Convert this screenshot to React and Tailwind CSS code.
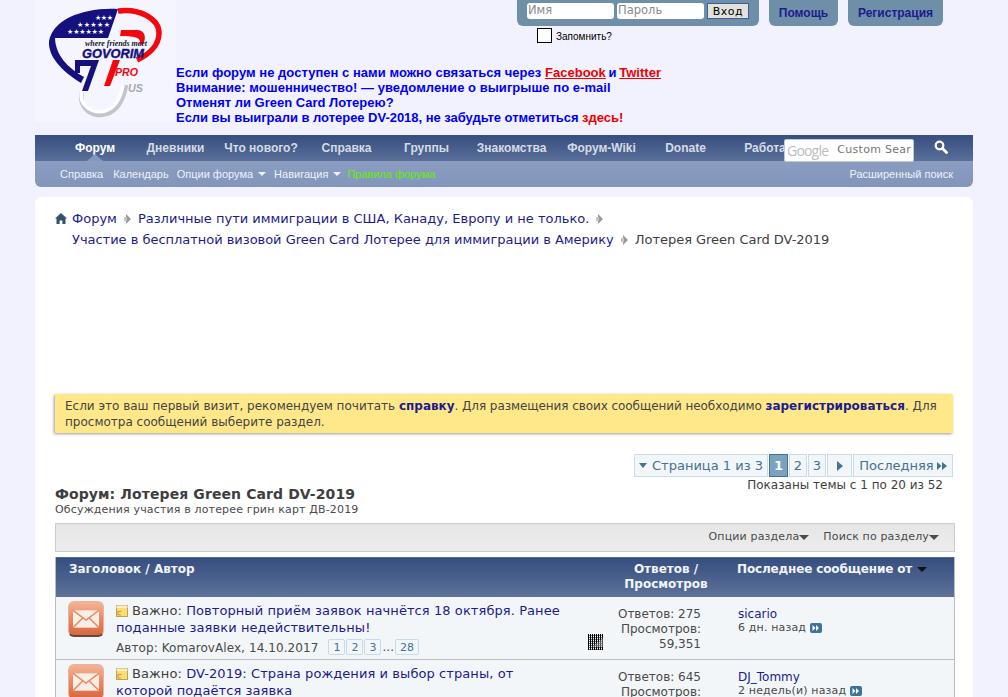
const mainNav = [
  { label: "Форум", width: "w-[80px]", active: true },
  { label: "Дневники", width: "w-[81px]" },
  { label: "Что нового?", width: "w-[90px]" },
  { label: "Справка", width: "w-[81px]" },
  { label: "Группы", width: "w-[79px]" },
  { label: "Знакомства", width: "w-[91px]" },
  { label: "Форум-Wiki", width: "w-[89px]" },
  { label: "Donate", width: "w-[79px]" },
  { label: "Работа", width: "w-[80px]" },
];

const threads = [
  {
    title: ["Повторный приём заявок начнётся 18 октября. Ранее", "поданные заявки недействительны!"],
    author: "KomarovAlex, 14.10.2017",
    pages: ["1", "2", "3"],
    lastPage: "28",
    replies: "275",
    views: "59,351",
    user: "sicario",
    ago: "6 дн. назад",
    broken: true,
  },
  {
    title: ["DV-2019: Страна рождения и выбор страны, от", "которой подаётся заявка"],
    author: "",
    replies: "645",
    views: "",
    user: "DJ_Tommy",
    ago: "2 недель(и) назад",
  },
];

const Logo = () => (
  <svg viewBox="0 0 130 115" className="w-[130px] h-[115px]">
    <path d="M78 4 C45 2 12 14 9 37 L15 33 L68 33 Z" fill="#14107e" />
    <path d="M9 36 C8 52 22 66 41 78 L44 72 C28 63 15 50 15 32 Z" fill="#14107e" />
    <path d="M35 55 H59 L48 86 H42 L51 61 H40 V68 H35 Z" fill="#14107e" />
    <path d="M78 6 C100 3 119 14 119 28 C119 41 108 50 97 55" fill="none" stroke="#f4060f" strokeWidth="5.5" />
    <path d="M81 25 H97 C107 25 107 38 100 41 C102 33 97 31 80 31 Z" fill="#f4060f" />
    <path d="M73 55 H80 L70 81 H64 Z" fill="#f4060f" />
    <path d="M42 87 C38 103 52 113 66 109 C78 106 84 93 86 80" fill="none" stroke="#c4c4ce" strokeWidth="4.5" />
    <path d="M42 86 C38 100 52 109 65 106 C76 103 81 91 83 80" fill="none" stroke="#ffffff" strokeWidth="3.5" />
    <g fill="#ffffff" fontSize="7" fontFamily="'DejaVu Sans', sans-serif">
      <text x="55" y="15" textLength="18">★★★</text>
      <text x="37" y="22" textLength="33">★★★★★</text>
      <text x="27" y="29" textLength="37">★★★★★★</text>
    </g>
    <text x="45" y="41" fontSize="8" fontStyle="italic" fontWeight="700" fill="#1a1a33" fontFamily="'Liberation Serif', serif" textLength="62">where friends meet</text>
    <text x="42" y="53" fontSize="13" fontStyle="italic" fontWeight="700" fill="#14107e" stroke="#14107e" strokeWidth="0.4" fontFamily="'Liberation Sans', sans-serif" textLength="62" lengthAdjust="spacingAndGlyphs">GOVORIM</text>
    <text x="75" y="71" fontSize="10" fontStyle="italic" fontWeight="700" fill="#f4060f" fontFamily="'Liberation Sans', sans-serif" textLength="23" lengthAdjust="spacingAndGlyphs">PRO</text>
    <text x="88" y="87" fontSize="10" fontStyle="italic" fontWeight="700" fill="#a8a8b4" fontFamily="'Liberation Sans', sans-serif" textLength="15" lengthAdjust="spacingAndGlyphs">US</text>
  </svg>
);

const SearchIcon = () => (
  <svg viewBox="0 0 14 14" className="w-[14px] h-[14px]">
    <circle cx="5.5" cy="5.5" r="3.8" fill="none" stroke="#fff" strokeWidth="2.2" />
    <path d="M8.5 8.5 L12.5 12.5" stroke="#fff" strokeWidth="2.8" strokeLinecap="round" />
  </svg>
);

const HomeIcon = () => (
  <svg viewBox="0 0 12 11" className="w-[12px] h-[11px]">
    <path d="M6 0 L12 5.6 L10.5 5.6 L10.5 11 L7.4 11 L7.4 7.4 L4.6 7.4 L4.6 11 L1.5 11 L1.5 5.6 L0 5.6 Z" fill="#2f5470" />
  </svg>
);

const CrumbArrow = () => (
  <svg viewBox="0 0 9 10" className="w-[9px] h-[10px] shrink-0">
    <path d="M3 0 L8 5 L3 10 Z" fill="#9a9a9a" />
    <path d="M1 3 H4 V7 H1 Z" fill="#c4c4c4" />
  </svg>
);

const MailIcon = () => (
  <div className="w-[36px] h-[36px] shrink-0 rounded-[6px] border border-[#e9b49c] border-b-[2px] border-b-[#5f4a40] bg-gradient-to-b from-[#f4b397] via-[#e98a64] to-[#d9673f] flex items-center justify-center">
    <svg viewBox="0 0 24 16" className="w-[26px] h-[18px]">
      <path d="M0 0 H24 V16 H0 Z" fill="#fbeee6" />
      <path d="M0 0 L12 9 L24 0 M0 16 L9 7 M24 16 L15 7" fill="none" stroke="#e98a64" strokeWidth="1.4" />
    </svg>
  </div>
);

const StickyIcon = () => (
  <svg viewBox="0 0 12 12" className="w-[12px] h-[12px] shrink-0 mr-[4px]">
    <rect x="0.5" y="0.5" width="11" height="11" fill="#fbdc74" stroke="#b9a25a" />
    <rect x="0.5" y="0.5" width="11" height="2.5" fill="#f8f0c0" />
    <path d="M2 10 V6.5 H5.5 M2 10 H5" fill="none" stroke="#e8912c" strokeWidth="1.2" />
  </svg>
);

const BrokenImage = () => (
  <svg viewBox="0 0 15 16" className="w-[15px] h-[16px]">
    <defs>
      <pattern id="checker" width="2" height="2" patternUnits="userSpaceOnUse">
        <rect width="1" height="2" fill="#000" />
        <rect x="1" y="1" width="1" height="1" fill="#777" />
      </pattern>
    </defs>
    <rect width="15" height="16" fill="url(#checker)" />
    <path d="M15 4 V13 H4 Z" fill="#bbb" opacity="0.45" />
  </svg>
);

const JumpIcon = () => (
  <span className="inline-flex w-[12px] h-[10px] rounded-[2px] bg-[#3d7396] items-center justify-center">
    <svg viewBox="0 0 8 6" className="w-[8px] h-[6px]">
      <path d="M0.5 0 L3.5 3 L0.5 6 Z M4 0 L7 3 L4 6 Z" fill="#fff" />
    </svg>
  </span>
);

const ArrowDown = () => (
  <span className="w-0 h-0 border-x-[5px] border-x-transparent border-t-[5px] border-t-[#4a4a4a]" />
);

const PageBox = ({ children, className = "" }) => (
  <span className={`h-[23px] flex items-center justify-center border border-[#c9dbe8] bg-[#f2f6f8] text-[#417394] ${className}`}>
    {children}
  </span>
);

const SmallPage = ({ children, className = "w-[17px]" }) => (
  <span className={`h-[16px] flex items-center justify-center rounded-[2px] border border-[#c9dbe8] text-[11px] text-[#417394] ${className}`}>
    {children}
  </span>
);

const ThreadRow = ({ thread }) => (
  <div className="h-[63px] flex bg-[#f2f6f8] border-b border-[#bdbdbd] shrink-0">
    <div className="w-[60px] pl-[12px] pt-[4px] shrink-0">
      <MailIcon />
    </div>
    <div className="w-[472px] shrink-0 pt-[5px] text-[13px] leading-[17px] text-[#3e3e3e] tracking-[0.08px] relative">
      <div className="flex items-center">
        <StickyIcon />
        <span>Важно:&nbsp;</span>
        <a className="text-[#1c1c8c]">{thread.title[0]}</a>
      </div>
      <a className="block text-[#1c1c8c]">{thread.title[1]}</a>
      {thread.author && (
        <div className="mt-[4px] flex items-center text-[12px] text-[#4a4a4a]">
          <span>Автор: {thread.author}</span>
          <div className="ml-[10px] flex items-center gap-[1px] -mt-[3px]">
            {thread.pages.map((p) => (
              <SmallPage key={p}>{p}</SmallPage>
            ))}
            <span>...</span>
            <SmallPage className="w-[24px]">{thread.lastPage}</SmallPage>
          </div>
        </div>
      )}
      {thread.broken && (
        <div className="absolute left-[472px] top-[37px]">
          <BrokenImage />
        </div>
      )}
    </div>
    <div className="w-[113px] shrink-0 pt-[10px] text-right text-[12px] leading-[15px] text-[#4a4a4a]">
      <div>Ответов: {thread.replies}</div>
      <div>Просмотров:</div>
      <div>{thread.views}</div>
    </div>
    <div className="pl-[37px] pt-[10px] text-[11px] leading-[14px] text-[#4a4a4a]">
      <a className="block text-[12px] text-[#1c1c8c]">{thread.user}</a>
      <div className="flex items-center gap-[4px] tracking-[0.15px]">
        <span>{thread.ago}</span>
        <JumpIcon />
      </div>
    </div>
  </div>
);

export default function App() {
  return (
    <div className="h-[697px] overflow-hidden bg-[#f2f2ff] px-[35px] font-['DejaVu_Sans',sans-serif]">
      {/* шапка */}
      <header className="h-[135px] flex">
        <div className="w-[141px] h-[122px] shrink-0 bg-[#f5f5ff] pl-[5px] pt-[5px]">
          <Logo />
        </div>
        <div className="flex-1">
          <div className="h-[65px] pl-[341px] font-['Liberation_Sans',sans-serif]">
            <div className="flex gap-[10px]">
              <form className="w-[242px] h-[26px] bg-[#6f8fa9] rounded-b-[6px] pl-[10px] pt-[3px] flex gap-[3px]">
                <input placeholder="Имя" className="w-[87px] h-[16px] rounded-[3px] bg-white px-[1px] text-[11.5px] font-['DejaVu_Sans',sans-serif] placeholder:text-[#8a8a8a]" />
                <input placeholder="Пароль" className="w-[87px] h-[16px] rounded-[3px] bg-white px-[1px] text-[11.5px] font-['DejaVu_Sans',sans-serif] placeholder:text-[#8a8a8a]" />
                <button type="button" className="w-[42px] h-[16px] border border-[#3f5f8f] bg-[#e4e2dc] text-[11px] leading-none text-black font-['DejaVu_Sans',sans-serif] tracking-[0.5px]">Вход</button>
              </form>
              <a className="w-[69px] h-[26px] bg-[#6f8fa9] rounded-b-[6px] flex items-center justify-center text-[12px] font-bold text-[#1c1c8c]">Помощь</a>
              <a className="w-[95px] h-[26px] bg-[#6f8fa9] rounded-b-[6px] flex items-center justify-center text-[12px] font-bold text-[#1c1c8c]">Регистрация</a>
            </div>
            <label className="mt-[2px] ml-[20px] flex items-end gap-[4px] text-[10px] leading-[12px] text-black">
              <span className="w-[15px] h-[15px] border border-black bg-white" />
              Запомнить?
            </label>
          </div>
          <div className="font-['Liberation_Sans',sans-serif] text-[13px] font-bold leading-[15px] text-[#0000f5]">
            <div className="tracking-[0.03px]">
              Если форум не доступен с нами можно связаться через{" "}
              <a className="text-[#f00000] underline">Facebook</a>{" "}
              <span className="-mx-[1px]">и</span>{" "}
              <a className="text-[#f00000] underline">Twitter</a>
            </div>
            <div className="tracking-[0.04px]">Внимание: мошенничество! — уведомление о выигрыше по e-mail</div>
            <div>Отменят ли Green Card Лотерею?</div>
            <div className="tracking-[-0.03px]">
              Если вы выиграли в лотерее DV-2018, не забудьте отметиться{" "}
              <span className="text-[#f00000]">здесь!</span>
            </div>
          </div>
        </div>
      </header>

      {/* навигация */}
      <nav className="relative h-[52px] rounded-b-[6px] font-['Liberation_Sans',sans-serif]">
        <div className="h-[26px] pl-[20px] flex bg-gradient-to-b from-[#364e7f] to-[#5a6f99] text-[12px] font-bold text-[#d6dbe6]">
          {mainNav.map((item) => (
            <a key={item.label} className={`${item.width} relative flex items-center justify-center pb-[1px] ${item.active ? "text-white" : ""}`}>
              {item.label}
              {item.active && (
                <span className="absolute bottom-0 left-1/2 -ml-[8px] w-0 h-0 border-x-[8px] border-x-transparent border-b-[7px] border-b-[#8398bc]" />
              )}
            </a>
          ))}
        </div>
        <div className="h-[26px] pl-[25px] pr-[20px] flex items-center rounded-b-[6px] bg-gradient-to-b from-[#8a9dc1] to-[#8295bb] text-[11px] text-[#f0f2f7]">
          <a className="mr-[10px]">Справка</a>
          <a className="mr-[8px]">Календарь</a>
          <a className="mr-[5px]">Опции форума</a>
          <span className="mr-[8px] w-0 h-0 border-x-[4px] border-x-transparent border-t-[4px] border-t-[#f0f2f7]" />
          <a className="mr-[5px]">Навигация</a>
          <span className="mr-[6px] w-0 h-0 border-x-[4px] border-x-transparent border-t-[4px] border-t-[#f0f2f7]" />
          <a className="text-[#66f000]">Правила форума</a>
          <a className="ml-auto">Расширенный поиск</a>
        </div>
        <div className="absolute left-[749px] top-[4px] w-[130px] h-[23px] rounded-[2px] border border-[#b9cbdc] bg-white flex items-center pl-[2px] overflow-hidden whitespace-nowrap">
          <span className="font-['Open_Sans',sans-serif] text-[14px] text-[#bdbdbd] tracking-[-0.8px]">Google</span>
          <span className="ml-[9px] font-['DejaVu_Sans',sans-serif] text-[11px] text-[#757575] tracking-[0.3px]">Custom Sear</span>
        </div>
        <div className="absolute left-[899px] top-[5px]">
          <SearchIcon />
        </div>
      </nav>

      {/* основной блок */}
      <main className="mt-[10px] h-[600px] rounded-[6px] bg-white px-[20px] pt-[11px]">
        <div className="text-[13px] leading-[21px] text-[#1c1c8c]">
          <div className="flex items-center">
            <span className="w-[17px]"><HomeIcon /></span>
            <a>Форум</a>
            <span className="mx-[6px]"><CrumbArrow /></span>
            <a>Различные пути иммиграции в США, Канаду, Европу и не только.</a>
            <span className="ml-[6px]"><CrumbArrow /></span>
          </div>
          <div className="flex items-center pl-[17px] tracking-[-0.025px]">
            <a>Участие в бесплатной визовой Green Card Лотерее для иммиграции в Америку</a>
            <span className="mx-[6px]"><CrumbArrow /></span>
            <span className="text-[#3e3e3e]">Лотерея Green Card DV-2019</span>
          </div>
        </div>

        <div className="mt-[144px] h-[39px] w-[898px] bg-[#ffe88a] px-[10px] pt-[4px] text-[12px] leading-[16px] text-[#444] shadow-[-1px_1px_3px_rgba(0,0,0,0.4)] rounded-[1px]">
          Если это ваш первый визит, рекомендуем почитать <a className="font-bold text-[#1c1c8c]">справку</a><span className="tracking-[-0.07px]">. Для размещения своих сообщений необходимо </span><a className="font-bold text-[#1c1c8c]">зарегистрироваться</a>. Для просмотра сообщений выберите раздел.
        </div>

        <div className="mt-[21px] h-[46px] w-[898px]">
          <div className="flex justify-end gap-[1px] text-[13px]">
            <PageBox className="w-[134px] gap-[5px]">
              <span className="w-0 h-0 border-x-[4px] border-x-transparent border-t-[5px] border-t-[#417394]" />
              Страница 1 из 3
            </PageBox>
            <span className="w-[19px] h-[23px] flex items-center justify-center border border-[#417394] bg-[#7aa3c0] font-bold text-white">1</span>
            <PageBox className="w-[18px]">2</PageBox>
            <PageBox className="w-[18px]">3</PageBox>
            <PageBox className="w-[25px]">
              <span className="w-0 h-0 border-y-[5px] border-y-transparent border-l-[6px] border-l-[#417394]" />
            </PageBox>
            <PageBox className="w-[100px] gap-[3px]">
              Последняя
              <svg viewBox="0 0 10 8" className="w-[10px] h-[8px]">
                <path d="M0 0 L4.5 4 L0 8 Z M5 0 L10 4 L5 8 Z" fill="#417394" />
              </svg>
            </PageBox>
          </div>
          <div className="pr-[10px] text-right text-[12px] leading-[17px] text-[#3e3e3e]">Показаны темы с 1 по 20 из 52</div>
        </div>

        <div className="-mt-[15px]">
          <h1 className="text-[14px] font-bold leading-[18px] text-[#3e3e3e] tracking-[0.1px]">Форум: Лотерея Green Card DV-2019</h1>
          <p className="text-[11px] leading-[14px] text-[#4a4a4a] tracking-[0.16px]">Обсуждения участия в лотерее грин карт ДВ-2019</p>
        </div>

        <div className="mt-[6px] h-[29px] w-[900px] border border-[#cccccc] bg-gradient-to-b from-[#e6e6e6] to-[#ececec] flex items-center justify-end pr-[15px] gap-[14px] text-[11px] text-[#4a4a4a] tracking-[0.15px]">
          <span className="flex items-center">
            Опции раздела
            <ArrowDown />
          </span>
          <span className="flex items-center">
            Поиск по разделу
            <ArrowDown />
          </span>
        </div>

        <div className="mt-[5px] w-[900px] flex flex-col border-x border-[#bdbdbd]">
          <div className="h-[40px] shrink-0 flex border-t border-[#417394] bg-gradient-to-b from-[#364e7f] to-[#5e7299] text-[12px] font-bold leading-[15px] text-[#f2f4f8]">
            <div className="w-[546px] pl-[13px] pt-[4px]">Заголовок / Автор</div>
            <div className="w-[128px] pt-[4px] text-center">Ответов / Просмотров</div>
            <div className="pl-[7px] pt-[4px] flex items-start tracking-[-0.15px]">
              Последнее сообщение от
              <span className="ml-[5px] mt-[5px] w-0 h-0 border-x-[5px] border-x-transparent border-t-[5px] border-t-[#111]" />
            </div>
          </div>
          {threads.map((thread) => (
            <ThreadRow key={thread.user} thread={thread} />
          ))}
        </div>
      </main>
    </div>
  );
}
